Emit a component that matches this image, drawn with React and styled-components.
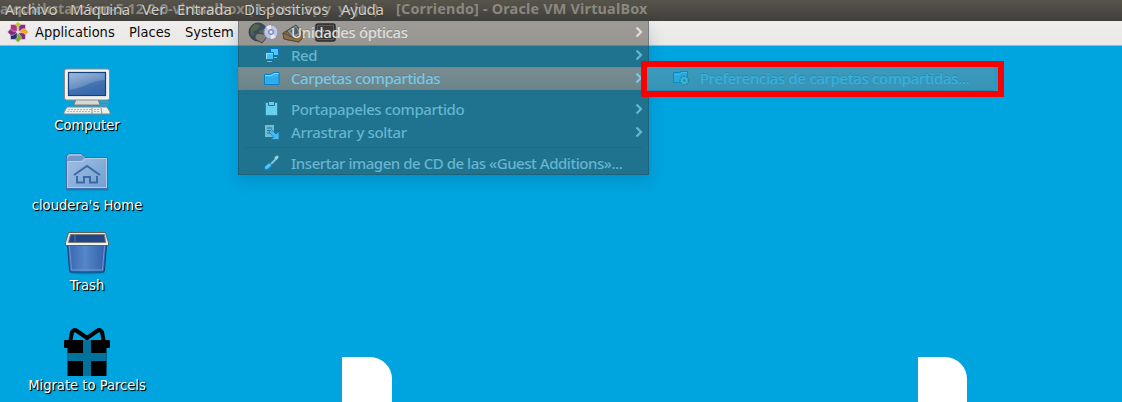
import React from "react";
import styled, { createGlobalStyle } from "styled-components";

const Global = createGlobalStyle`
  * { box-sizing: border-box; }
  body { margin: 0; overflow: hidden; }
`;

const Screen = styled.div`
  position: relative;
  width: 1122px;
  height: 402px;
  display: flex;
  flex-direction: column;
  overflow: hidden;
  background: #00a4df;
`;

const TitleBar = styled.header`
  position: relative;
  flex: none;
  height: 21px;
  background: linear-gradient(#57544c, #403f3a);
  font: 15px/18px "Noto Sans", sans-serif;
  white-space: pre;
`;

const WindowTitle = styled.div`
  display: flex;
  height: 18px;
  color: #8b8880;
  font-weight: 700;
  font-size: 14.4px;
`;

const TitlePart = styled.span`
  flex: none;
  width: ${(p) => p.$w}px;
  letter-spacing: ${(p) => p.$ls || 0}px;
`;

const MenuBar = styled.nav`
  position: absolute;
  inset: 0 auto auto 5px;
  display: flex;
  color: #d0cec8;
  text-shadow: 0 1px 1px #33322e;
`;

const Panel = styled.div`
  flex: none;
  height: 25px;
  display: flex;
  align-items: center;
  padding: 0 0 2px 7px;
  border-bottom: 1px solid #b5b1ac;
  background: linear-gradient(#efeeec, #e9e8e6);
  color: #0c0c0c;
  font: 14.5px/22px "DejaVu Sans Condensed", "DejaVu Sans", sans-serif;
  font-stretch: condensed;
`;

const PanelItem = styled.span`
  flex: none;
  width: ${(p) => p.$w}px;
  white-space: nowrap;
`;

const Logo = styled.svg`
  flex: none;
  width: 22px;
  height: 22px;
  margin-right: 6px;
`;

const Launchers = styled.svg`
  flex: none;
  width: 98px;
  height: 24px;
  margin: 2px 0 0 5px;
`;

const Desktop = styled.main`
  position: relative;
  flex: 1;
`;

const Wallpaper = styled.div`
  position: absolute;
  inset: 0;
  display: flex;
  align-items: flex-end;
  gap: 526px;
  padding-left: 342px;
`;

const Block = styled.div`
  width: 49.5px;
  height: 45px;
  border-top-right-radius: 22px;
  background: #fff;
`;

const Shortcuts = styled.div`
  position: relative;
  width: 174px;
  padding-top: 22px;
`;

const Shortcut = styled.div`
  height: ${(p) => p.$h}px;
  display: flex;
  flex-direction: column;
  align-items: center;
  color: #fff;
  font: 14.6px/18px "DejaVu Sans Condensed", "DejaVu Sans", sans-serif;
  font-stretch: condensed;
  text-shadow: 1px 1px 1px #000, 1px 1px 0 #002b3c;
  white-space: nowrap;
`;

const Picture = styled.svg`
  flex: none;
  width: 48px;
  height: 48px;
`;

const Menu = styled.div`
  position: absolute;
  left: 238px;
  top: 21px;
  width: 411px;
  height: 154px;
  background: rgba(67, 63, 57, 0.477);
  box-shadow: inset 1px 0 rgba(30, 60, 75, 0.3), inset -1px -1px rgba(30, 60, 75, 0.3), 0 5px 14px rgba(0, 60, 110, 0.2);
`;

const Row = styled.div`
  height: 23px;
  display: flex;
  align-items: center;
  padding: 0 6px 0 25px;
  color: ${(p) => p.$color || "#65b7d2"};
  background: ${(p) => (p.$active ? "linear-gradient(rgba(240,177,150,.43), rgba(225,160,132,.38))" : "none")};
  box-shadow: ${(p) => (p.$active ? "inset 0 1px #5e909b, inset 0 -1px #5e8790" : "none")};
  font: 500 15px/23px "Noto Sans", sans-serif;
  white-space: nowrap;
`;

const RowText = styled.span`
  flex: 1;
  letter-spacing: ${(p) => p.$ls || 0}px;
  text-shadow: 0 -1px rgba(20, 70, 90, 0.2);
`;

const RowIcon = styled.svg`
  flex: none;
  width: 18px;
  height: 18px;
  margin-right: 10px;
`;

const Arrow = styled.svg`
  flex: none;
  width: 8px;
  height: 12px;
  margin-top: -2px;
`;

const Divider = styled.div`
  height: 8px;
  margin: 0 6px;
  background: linear-gradient(#1e6d88, #1e6d88) 0 3px / 100% 1px no-repeat;
`;

const Highlight = styled.div`
  position: absolute;
  left: 641px;
  top: 61px;
  width: 363px;
  height: 36px;
  border: 6px solid #fb0000;
  padding-right: 4px;
  background: #2b98c2;
`;

const SubRow = styled.div`
  height: 24px;
  display: flex;
  align-items: center;
  padding: 0 0 1px 25px;
  background: linear-gradient(#3d9abb, #3694b7);
  border-bottom: 1px solid #2588ae;
  color: #34b2df;
  font: 500 15px/22px "Noto Sans", sans-serif;
  white-space: nowrap;
`;

function Chevron({ color }) {
  return (
    <Arrow viewBox="0 0 8 12">
      <path d="M1.500 1.500 6 6 1.500 10.500" fill="none" stroke={color} strokeWidth="2.2" />
    </Arrow>
  );
}

function Entry({ text, ls, icon, color, active, arrow = true }) {
  return (
    <Row $color={color} $active={active}>
      <RowIcon viewBox="0 0 18 18">{icon}</RowIcon>
      <RowText $ls={ls}>{text}</RowText>
      {arrow && <Chevron color={color || "#65b7d2"} />}
    </Row>
  );
}

const petals = [
  ["#b0d136", 0], ["#8c2583", 45], ["#efa724", 90], ["#7e2b82", 135],
  ["#7eae35", 180], ["#292d78", 225], ["#7e2b82", 270], ["#b42f86", 315],
];

const discIcon = (
  <g transform="translate(8 8)">
    <circle r="7" fill="#c0c7de" stroke="#8795bb" />
    <path d="M0 0-5-5A7 7 0 0 1 0-7ZM0 0 5 5A7 7 0 0 1 0 7Z" fill="#e8e8ef" />
    <circle r="2.500" fill="#a8b9e0" stroke="#6f82b9" />
    <circle r="1" fill="#fff" />
  </g>
);

const netIcon = (
  <g>
    <path d="M7.500 1.500h8v7h-8z" fill="#53c6f3" stroke="#0878c6" />
    <path d="M10 10.500h4" stroke="#5ec4e7" />
    <path d="M2.500 5.500h8v7h-8z" fill="#48bff1" stroke="#0878c6" />
    <path d="M3 6.500h7M3.500 6v6" stroke="#8fdcf4" />
    <path d="M4 14.500h5" stroke="#5ec4e7" />
  </g>
);

const folderIcon = (
  <g>
    <path d="M1.500 14.500V4.500H8L10 2.500h6v12z" fill="#38b7ef" stroke="#087bc6" />
    <path d="M2 5.500h7l2-2h4.500" fill="none" stroke="#8addf8" />
    <path d="M2.500 6.500h12.500v7H2.500z" fill="#2daeea" />
  </g>
);

const clipIcon = (
  <g>
    <path d="M2.500 1.500h12v13h-12z" fill="#6bd0ef" stroke="#1189d1" />
    <path d="M5.500 1v3.500h6V1" fill="#72cbe6" stroke="#236f8d" />
  </g>
);

const dragIcon = (
  <g>
    <path d="M2 1h9v12H2z" fill="#70bdd3" />
    <path d="M4 4h5M4 6.500h4M4 9h4" stroke="#23718d" />
    <path d="m6 8 2.500-2.500 4.500 4.500 3-2.500v8H8l2.500-2.500z" fill="#45bceb" stroke="#0d79be" strokeWidth=".8" />
  </g>
);

const toolIcon = (
  <g strokeLinecap="round">
    <path d="m8 9 6-6" stroke="#82c6d6" strokeWidth="2" />
    <path d="m13 3 1-1" stroke="#94d1df" strokeWidth="3" />
    <path d="m3.500 13 3-2.500" stroke="#1183cc" strokeWidth="5" />
    <path d="m3.500 12.500 3-2.500" stroke="#58c6ef" strokeWidth="3" />
  </g>
);

const settingsIcon = (
  <g>
    <path d="M1.500 13.500V3.500H7l2-1h6.500v11z" fill="#25a7df" stroke="#078bce" />
    <path d="M2.500 5.500H8l2-2h5" fill="none" stroke="#49bbe2" />
    <circle cx="12.300" cy="11.500" r="4.200" fill="#43b4d0" stroke="#168bb2" strokeDasharray="2 1" strokeWidth="1.500" />
    <circle cx="12.300" cy="11.500" r="1.300" fill="#1789ae" />
  </g>
);

export default function App() {
  return (
    <Screen>
      <Global />
      <TitleBar>
        <WindowTitle>
          <TitlePart $w={248} $ls={-0.18}>a-quickstart-vm-5.12.0-0-virtualbox</TitlePart>
          <TitlePart $w={148} $ls={1.6}>(1-jun spy y-jt:)</TitlePart>
          <TitlePart $w={260} $ls={0.19}>[Corriendo] - Oracle VM VirtualBox</TitlePart>
        </WindowTitle>
        <MenuBar>
          <TitlePart $w={65}>Archivo</TitlePart>
          <TitlePart $w={72} $ls={-0.3}>Máquina</TitlePart>
          <TitlePart $w={35}>Ver</TitlePart>
          <TitlePart $w={67}>Entrada</TitlePart>
          <TitlePart $w={97}>Dispositivos</TitlePart>
          <TitlePart $w={50} $ls={-0.3}>Ayuda</TitlePart>
        </MenuBar>
      </TitleBar>
      <Panel>
        <Logo viewBox="-11 -11 22 22">
          {petals.map(([color, angle]) => (
            <g key={angle} transform={`rotate(${angle})`}>
              <path d="M0-1-3.200-4.500v-3L0-10.500 3.200-7.500v3z" fill={color} stroke="#f0e9e9" strokeWidth=".5" />
            </g>
          ))}
        </Logo>
        <PanelItem $w={94}>Applications</PanelItem>
        <PanelItem $w={56}>Places</PanelItem>
        <PanelItem $w={50}>System</PanelItem>
        <Launchers viewBox="0 0 98 24">
          <circle cx="18" cy="11" r="9" fill="#315b85" stroke="#263f52" />
          <path d="M11 7c3-5 6-4 9-2l-3 4-4 1 1 5-3-2zM19 10l5-2 1 5-4 4z" fill="#698957" />
          <path d="M15 14c5-4 10 0 12 2l-5 6-7-4z" fill="#b8b9b6" stroke="#444" />
          <path d="m43 12 13-8 9 10-6 7-15-3z" fill="#b98c50" stroke="#69502e" />
          <path d="m47 10 9-6 6 9-9 4z" fill="#dedbd0" stroke="#626458" />
          <path d="m50 10 6-4 3 6-5 2z" fill="#4f7c98" />
          <path d="m43 12 11 5 11-3-6 7-15-3z" fill="#c89d64" stroke="#75562f" />
          <rect x="76" y="3" width="19" height="17" rx="2" fill="#777" stroke="#171717" strokeWidth="1.5" />
          <rect x="78.500" y="5.500" width="14" height="12" fill="#3a3d3a" stroke="#333" />
          <path d="m81 8 3 2-3 2M85 13h4" stroke="#d4d7d0" fill="none" />
        </Launchers>
      </Panel>
      <Desktop>
        <Wallpaper><Block /><Block /></Wallpaper>
        <Shortcuts>
          <Shortcut $h={80}>
            <Picture viewBox="0 0 48 48">
              <defs>
                <linearGradient id="screen" x2=".5" y2="1"><stop stopColor="#a4bddb" /><stop offset="1" stopColor="#3f71b3" /></linearGradient>
              </defs>
              <path d="M13 31h22l2 6H11z" fill="#d8d8d5" stroke="#80827c" />
              <rect x="1.500" y="1" width="45" height="31" rx="2" fill="#f0f0ed" stroke="#8b8b85" />
              <rect x="5.500" y="4.500" width="37" height="23" fill="url(#screen)" stroke="#134180" strokeWidth="1.200" />
              <path d="M6 22c13-1 22-10 36-10v15H6z" fill="#2e61a5" opacity=".55" />
              <path d="M38 34h7q2 2-2 3h-5v3" fill="none" stroke="#629cb9" />
              <path d="M4 39h40l3 5v2H1v-2z" fill="#eeeeeb" stroke="#888a85" />
              <path d="M5 41.500h23M4 43.500h24M31 41.500h5M31 43.500h6" stroke="#b5b6b1" strokeDasharray="2 1" />
              <path d="M29 40v6M38 40l1 6" stroke="#8e908b" />
            </Picture>
            Computer
          </Shortcut>
          <Shortcut $h={80}>
            <Picture viewBox="0 0 48 48">
              <defs>
                <linearGradient id="folder" y2="1"><stop stopColor="#a4c0e4" /><stop offset="1" stopColor="#719fd1" /></linearGradient>
              </defs>
              <path d="M3 41.500h43" stroke="#176b9e" strokeWidth="2" opacity=".6" />
              <path d="M3.500 11.500V8L6 5.500h12L22 9.500h22.500v31h-41z" fill="url(#folder)" stroke="#426da9" />
              <path d="M4.500 13.500h15l4-3h20v29h-39z" fill="none" stroke="#b3cce9" />
              <path d="M4 13q0-3 2-5h13l2 2-3 3z" fill="#7298c9" />
              <path d="m11 27 13-9 13 9M14 28v6.500h7V29h6v5.500h7V28" fill="none" stroke="#3c69a8" strokeWidth="2" />
            </Picture>
            cloudera's Home
          </Shortcut>
          <Shortcut $h={100}>
            <Picture viewBox="0 0 48 48">
              <defs>
                <linearGradient id="bin"><stop stopColor="#3465af" /><stop offset=".45" stopColor="#5687c8" /><stop offset="1" stopColor="#315fa9" /></linearGradient>
              </defs>
              <ellipse cx="24" cy="44" rx="18" ry="2.500" fill="#075f8b" opacity=".5" />
              <path d="m4.500 17 2 25q0 2 2 2h31q2 0 2-2l2-25z" fill="url(#bin)" stroke="#153d7d" />
              <path d="m6.500 18 2 24h31l2-24" fill="none" stroke="#7397cf" />
              <path d="M5.500 4.500h37l3 10v3h-43v-3z" fill="#e3e3e0" stroke="#5e625e" />
              <path d="M7.500 6.500h34l1 8h-37z" fill="#234786" stroke="#787e7b" />
              <path d="M12 7v7" stroke="#5274a7" />
              <path d="M3 16h42" stroke="#fff" />
            </Picture>
            Trash
          </Shortcut>
          <Shortcut $h={66}>
            <Picture viewBox="0 0 48 48">
              <path d="M7.500 12 9 4Q11 1 14 3l10 7L34 3q3-2 5 1l1.500 8" fill="none" stroke="#000" strokeWidth="4" />
              <path d="M2 12h44q1 0 1 1v6q0 1-1 1h-2.500v28h-39V20H2q-1 0-1-1v-6q0-1 1-1z" />
              <path d="M20 12h8v36h-8zM4.500 25h39v8h-39z" fill="#00729c" />
            </Picture>
            Migrate to Parcels
          </Shortcut>
        </Shortcuts>
      </Desktop>
      <Menu>
        <Entry text="Unidades ópticas" ls={-0.4} color="#dfdedc" icon={discIcon} />
        <Entry text="Red" ls={-0.45} icon={netIcon} />
        <Entry text="Carpetas compartidas" ls={-0.43} color="#78cae8" active icon={folderIcon} />
        <Divider />
        <Entry text="Portapapeles compartido" ls={-0.37} icon={clipIcon} />
        <Entry text="Arrastrar y soltar" ls={-0.33} icon={dragIcon} />
        <Divider />
        <Entry text="Insertar imagen de CD de las «Guest Additions»..." ls={-0.46} arrow={false} icon={toolIcon} />
      </Menu>
      <Highlight>
        <SubRow>
          <RowIcon viewBox="0 0 18 18">{settingsIcon}</RowIcon>
          <RowText $ls={-0.34}>Preferencias de carpetas compartidas...</RowText>
        </SubRow>
      </Highlight>
    </Screen>
  );
}
